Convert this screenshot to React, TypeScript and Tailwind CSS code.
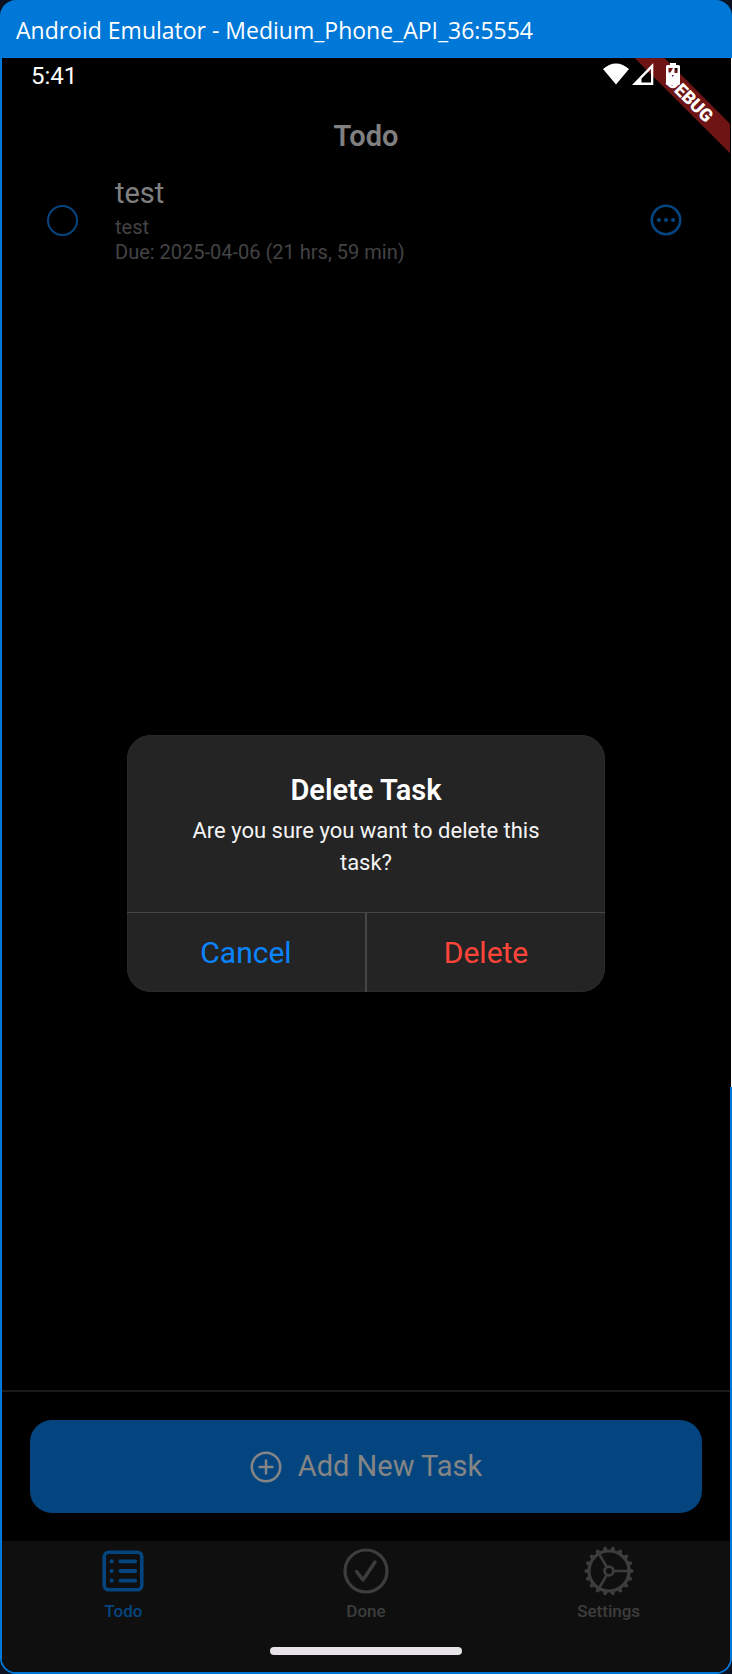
import React from "react";

const GEAR_ANGLES = Array.from({ length: 18 }, (_, i) => i * 20);

function WifiIcon() {
  return (
    <svg width="26" height="22" viewBox="0 0 26 22" fill="#fff" aria-hidden="true">
      <path d="M0 6Q6 0.4 13 0.4T26 6L13 21.5Z" />
    </svg>
  );
}

function SignalIcon() {
  return (
    <svg width="22" height="22" viewBox="0 0 22 22" aria-hidden="true">
      <path fillRule="evenodd" fill="#fff" d="M21.3 0V22H0ZM19 6V19.4H9.5V15.6Z" />
    </svg>
  );
}

function BatteryIcon() {
  return (
    <svg width="14" height="22" viewBox="0 0 14 22" aria-hidden="true">
      <path
        fillRule="evenodd"
        fill="#fff"
        d="M4 0H10V2H12.5Q14 2 14 3.5V20.5Q14 22 12.5 22H1.5Q0 22 0 20.5V3.5Q0 2 1.5 2H4ZM2.5 5V9.5H4.5L7 5ZM8.5 5V10H11.5V5ZM6 12V18L9 12Z"
      />
    </svg>
  );
}

function ListIcon() {
  return (
    <svg width="42" height="42" viewBox="0 0 42 42" fill="none" stroke="currentColor" strokeLinecap="round" aria-hidden="true">
      <rect x="2.2" y="2.2" width="37.6" height="37.6" rx="4.5" strokeWidth="3.6" />
      <path d="M18.4 11.4H33.2M18.4 21H33.2M18.4 30.6H33.2" strokeWidth="3.9" />
      <g fill="currentColor" stroke="none">
        <circle cx="9.7" cy="11.4" r="2.1" />
        <circle cx="9.7" cy="21" r="2.1" />
        <circle cx="9.7" cy="30.6" r="2.1" />
      </g>
    </svg>
  );
}

function CheckCircleIcon() {
  return (
    <svg width="46" height="46" viewBox="0 0 46 46" fill="none" stroke="currentColor" strokeLinecap="round" strokeLinejoin="round" aria-hidden="true">
      <circle cx="23" cy="23" r="21" strokeWidth="3.2" />
      <path d="M13.5 23.5L20 32L32 14" strokeWidth="3.4" />
    </svg>
  );
}

function GearIcon() {
  return (
    <svg width="50" height="50" viewBox="-25 -25 50 50" fill="none" stroke="currentColor" aria-hidden="true">
      <circle r="20" strokeWidth="3.2" />
      <circle r="4.4" strokeWidth="2.8" />
      {[0, 120, 240].map((a) => (
        <path key={a} d="M5 0H19" strokeWidth="2.6" transform={`rotate(${a})`} />
      ))}
      {GEAR_ANGLES.map((a) => (
        <path key={a} d="M21 -2.6L24.2 -1.2Q25 0 24.2 1.2L21 2.6Z" fill="currentColor" stroke="none" transform={`rotate(${a})`} />
      ))}
    </svg>
  );
}

function MoreIcon() {
  return (
    <svg width="32" height="32" viewBox="0 0 32 32" aria-hidden="true">
      <circle cx="16" cy="16" r="14.2" fill="none" stroke="currentColor" strokeWidth="2.6" />
      <g fill="currentColor">
        <circle cx="8.9" cy="16" r="2.1" />
        <circle cx="16" cy="16" r="2.1" />
        <circle cx="23.1" cy="16" r="2.1" />
      </g>
    </svg>
  );
}

function PlusCircleIcon() {
  return (
    <svg width="32" height="32" viewBox="0 0 32 32" fill="none" stroke="currentColor" strokeWidth="2.5" strokeLinecap="round" aria-hidden="true">
      <circle cx="16" cy="16" r="14.2" />
      <path d="M16 9.5V22.5M9.5 16H22.5" />
    </svg>
  );
}

function DebugBanner() {
  return (
    <div className="pointer-events-none absolute right-0 top-0 size-24 overflow-hidden">
      <div className="absolute left-[-24px] top-[30px] h-[21px] w-[160px] rotate-45 bg-[#6f1415] text-center text-[18px] font-black leading-[21px] text-white">
        DEBUG
      </div>
    </div>
  );
}

function StatusBar() {
  return (
    <div className="relative flex h-[43px] items-start justify-between pl-[29px] pr-[50px] text-white">
      <DebugBanner />
      <time className="mt-1 text-[24px] leading-7">5:41</time>
      <div className="relative mt-[5px] flex">
        <WifiIcon />
        <span className="ml-[3px]"><SignalIcon /></span>
        <span className="ml-[12px]"><BatteryIcon /></span>
      </div>
    </div>
  );
}

function Task() {
  return (
    <li className="flex items-center pl-[45px] pr-12">
      <input
        type="checkbox"
        aria-label="Mark test as done"
        className="size-[31px] shrink-0 appearance-none rounded-full border-2 border-[#05457f]"
      />
      <div className="ml-[37px] flex-1">
        <h2 className="text-[29px] leading-[36px] text-[#808080]">test</h2>
        <p className="mt-[4px] text-[20px] leading-[25px] text-[#434345]">test</p>
        <p className="text-[20px] leading-[25px] text-[#434345]">Due: 2025-04-06 (21 hrs, 59 min)</p>
      </div>
      <button type="button" aria-label="Task options" className="text-[#05457f]">
        <MoreIcon />
      </button>
    </li>
  );
}

function Tab({ label, active, children }: { label: string; active?: boolean; children: React.ReactNode }) {
  return (
    <a href="#" className={`flex flex-1 flex-col items-center ${active ? "text-[#05457f]" : "text-[#3d3d3d]"}`}>
      <span className="flex h-[50px] items-center">{children}</span>
      <span className="mt-[5px] text-[17px] font-medium leading-5">{label}</span>
    </a>
  );
}

function DeleteDialog() {
  return (
    <div className="absolute inset-0 flex items-center justify-center pb-1">
      <div role="alertdialog" aria-labelledby="dialog-title" aria-describedby="dialog-text" className="w-[478px] overflow-hidden rounded-[24px] bg-[#242424] text-center ring-1 ring-inset ring-[#292929]">
        <div className="px-[53px] pb-[33px] pt-[36px]">
          <h2 id="dialog-title" className="text-[29px] font-semibold leading-[38px] text-white">Delete Task</h2>
          <p id="dialog-text" className="mt-[6px] text-[22px] leading-8 text-[#f4f4f4]">Are you sure you want to delete this task?</p>
        </div>
        <div className="flex h-[80px] border-t border-[#464646] text-[30px]">
          <button type="button" className="flex-1 text-[#0a84ff]">Cancel</button>
          <button type="button" className="flex-1 border-l-2 border-[#464646] text-[#ff453a]">Delete</button>
        </div>
      </div>
    </div>
  );
}

export default function App() {
  return (
    <div className="min-h-screen bg-[#0b1322]">
      <div className="relative flex min-h-screen flex-col overflow-hidden rounded-[16px] bg-[#0078d7] px-[2px] pb-[2px] font-[Roboto,sans-serif]">
        <header className="flex h-[58px] items-center px-[14px] pt-[2px] font-['Open_Sans',sans-serif] text-[23px] text-white">
          Android Emulator - Medium_Phone_API_36:5554
        </header>
        <div className="relative flex flex-1 flex-col overflow-hidden rounded-b-[14px] bg-black">
          <StatusBar />
          <h1 className="mt-[17px] text-center text-[29px] font-semibold leading-[36px] text-[#808080]">Todo</h1>
          <main className="flex-1 pt-[21px]">
            <ul><Task /></ul>
          </main>
          <div className="border-t-2 border-[#1a1a1a] px-7 py-[28px]">
            <button type="button" className="flex h-[93px] w-full items-center justify-center gap-4 rounded-[22px] bg-[#05457f] text-[29px] text-[#858585]">
              <PlusCircleIcon />
              Add New Task
            </button>
          </div>
          <nav className="bg-[#0f0f0f] pt-[5px]">
            <div className="flex">
              <Tab label="Todo" active><ListIcon /></Tab>
              <Tab label="Done"><CheckCircleIcon /></Tab>
              <Tab label="Settings"><GearIcon /></Tab>
            </div>
            <div className="mx-auto mb-[17px] mt-[26px] h-[8px] w-[192px] rounded-full bg-[#e6e4e6]" />
          </nav>
          <DeleteDialog />
        </div>
        <div className="absolute right-0 top-[58px] h-[1029px] w-[2px] border-r border-white bg-black" />
      </div>
    </div>
  );
}
